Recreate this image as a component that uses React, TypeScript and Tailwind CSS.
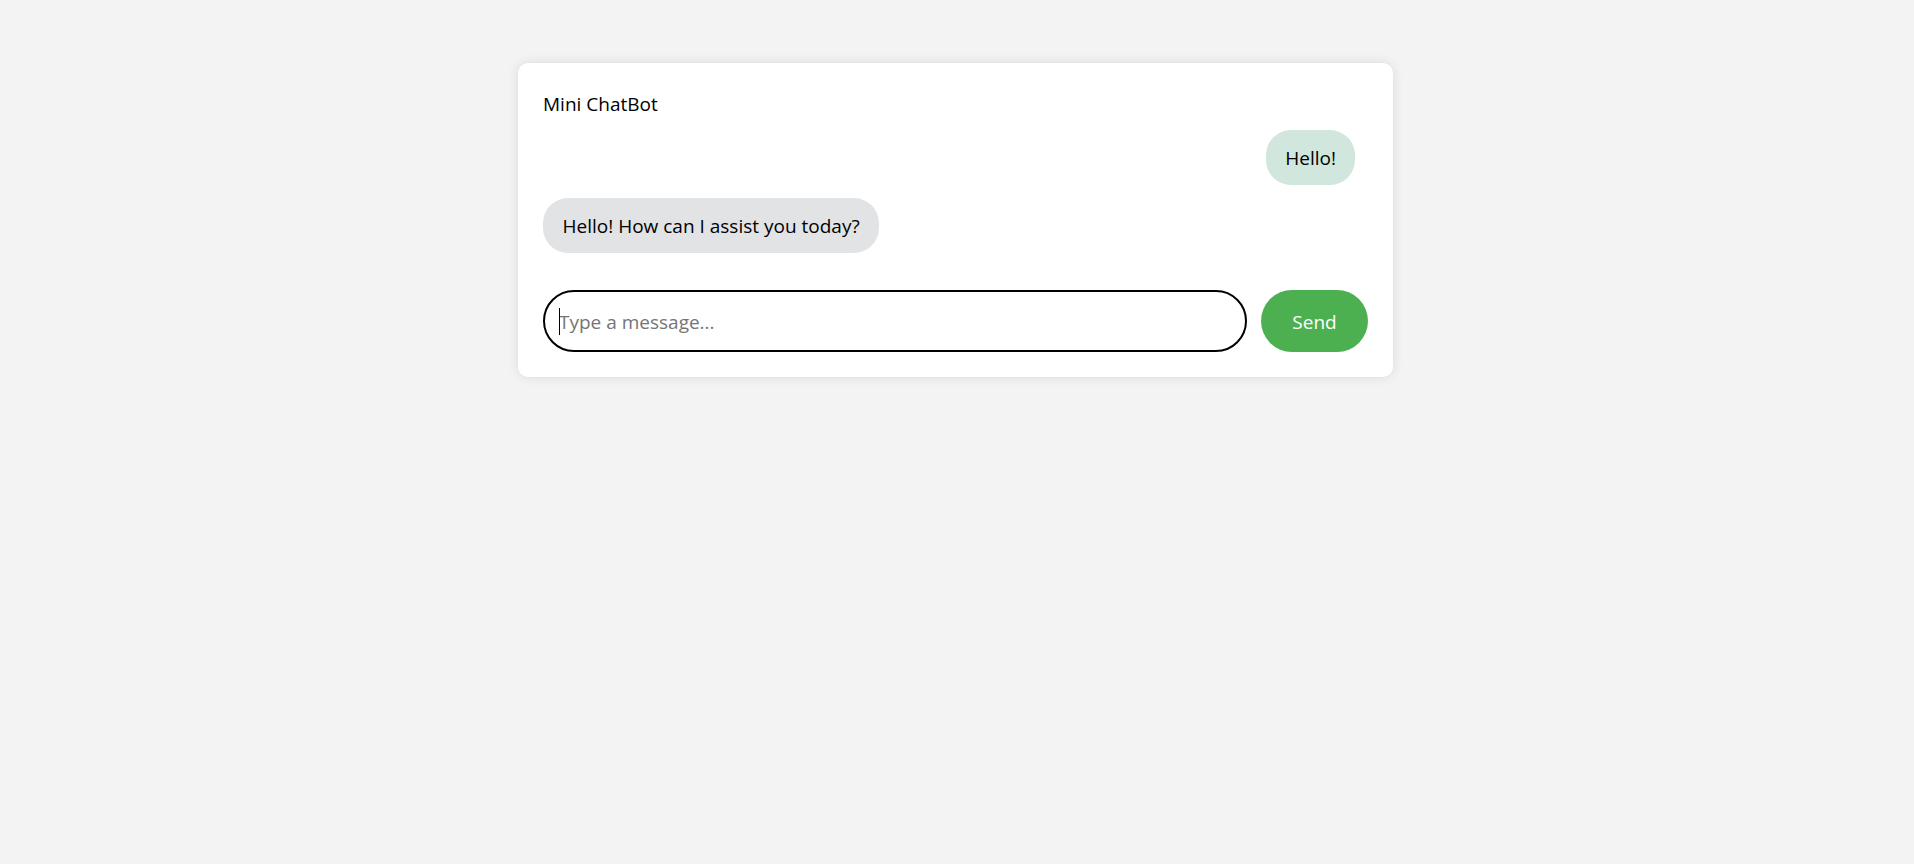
import React from "react";

export default function App() {
  return (
    <div
      className="min-h-[864px] w-full bg-[#f3f3f3] pr-[3px] pt-[63px]"
      style={{ fontFamily: '"Open Sans", "Noto Sans", sans-serif' }}
    >
      <div className="mx-auto flex w-[875px] flex-col rounded-[10px] bg-white p-[25px] shadow-[0_0_12px_rgba(0,0,0,0.1)]">
        <div className="mb-[12px] mt-[3px] text-[19px] leading-[27px] text-black">Mini ChatBot</div>
        <div className="flex flex-col gap-[13px]">
          <div className="flex justify-end pr-[13px]">
            <div className="rounded-[25px] bg-[#d1e7dd] px-[19px] py-[12.5px] text-[19px] leading-[30px] text-black">
              Hello!
            </div>
          </div>
          <div className="flex justify-start">
            <div className="rounded-[25px] bg-[#e2e3e5] px-[19.5px] py-[12.5px] text-[19px] leading-[30px] text-black">
              Hello! How can I assist you today?
            </div>
          </div>
        </div>
        <div className="mt-[37px] flex items-stretch gap-[14px]">
          <div className="relative flex flex-1">
            <input
              type="text"
              placeholder="Type a message..."
              className="h-[62px] w-full rounded-full border-2 border-black bg-white px-[14px] pt-[2px] text-[19px] text-black outline-none placeholder:text-[#757575]"
            />
            <span className="pointer-events-none absolute left-[16px] top-[18px] h-[27px] w-px bg-black" />
          </div>
          <button className="h-[62px] w-[107px] rounded-full bg-[#4caf50] pt-[2px] text-[19px] text-white">
            Send
          </button>
        </div>
      </div>
    </div>
  );
}
